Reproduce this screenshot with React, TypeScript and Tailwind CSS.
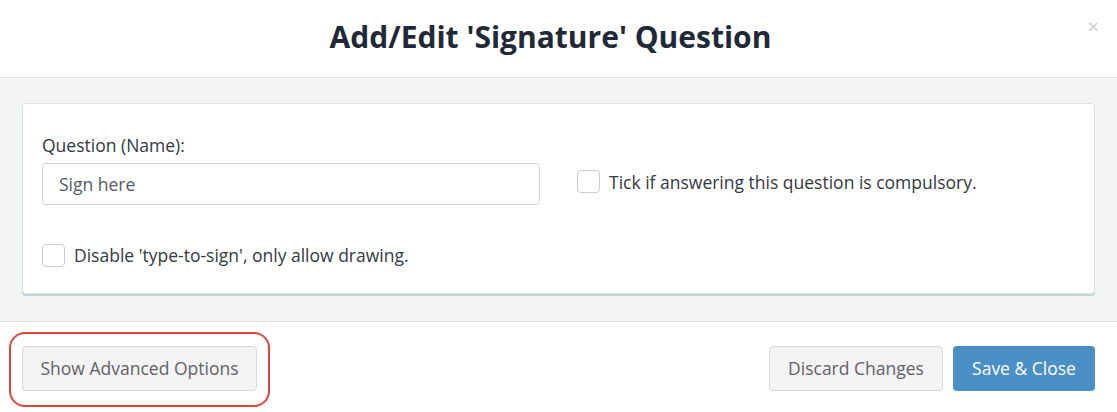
import React from "react";

export default function App() {
  return (
    <div className="w-[1117px] h-[412px] bg-white flex flex-col" style={{ fontFamily: '"Open Sans", sans-serif' }}>
      <div className="relative h-[78px] shrink-0 border-b border-[#dfe3e3] flex items-center justify-center">
        <h1 className="text-[30px] font-bold text-[#1f2937] leading-none pr-[16px] pb-[3px]">Add/Edit 'Signature' Question</h1>
        <span className="absolute right-[18px] top-[17px] text-[#c8c8c8] text-[20px] leading-none">×</span>
      </div>
      <div className="h-[244px] shrink-0 bg-[#f3f5f4] border-b border-[#dfe3e3] px-[22px] pt-[25px]">
        <div className="bg-white border border-[#dde3e4] rounded-[4px] shadow-[0_2px_0_#c9d3d5] h-[191px] px-[19px] pt-[30px]">
          <div className="flex items-end">
            <div className="w-[498px] flex flex-col">
              <label className="text-[17.5px] text-[#333a40] leading-[22px]">Question (Name):</label>
              <div className="mt-[7px] h-[42px] border border-[#cfd6da] rounded-[4px] flex items-center pl-[16px] text-[17.5px] text-[#555b60]">Sign here</div>
            </div>
            <div className="ml-[37px] mb-[10px] flex items-center">
              <span className="w-[23px] h-[23px] border border-[#c8cdd0] rounded-[4px] bg-white" />
              <span className="ml-[9px] text-[17.5px] text-[#333a40]">Tick if answering this question is compulsory.</span>
            </div>
          </div>
          <div className="mt-[37px] flex items-center">
            <span className="w-[23px] h-[23px] border border-[#c8cdd0] rounded-[4px] bg-white" />
            <span className="ml-[9px] text-[17.5px] text-[#333a40]">Disable 'type-to-sign', only allow drawing.</span>
          </div>
        </div>
      </div>
      <div className="flex-1 flex items-start justify-between px-[22px] pt-[24px]">
        <div className="relative">
          <div className="absolute left-[-13px] top-[-14px] w-[261px] h-[75px] rounded-[16px] border-2 border-[#e0443f]" />
          <button className="h-[45px] w-[235px] bg-[#f3f3f3] border border-[#d5d9da] rounded-[4px] text-[17.5px] text-[#5f6366]">Show Advanced Options</button>
        </div>
        <div className="flex gap-[10px]">
          <button className="h-[45px] w-[174px] bg-[#f3f3f3] border border-[#d5d9da] rounded-[4px] text-[17.5px] text-[#5f6366]">Discard Changes</button>
          <button className="h-[45px] w-[142px] bg-[#4a8fc5] rounded-[4px] text-[17.5px] text-white">Save &amp; Close</button>
        </div>
      </div>
    </div>
  );
}
